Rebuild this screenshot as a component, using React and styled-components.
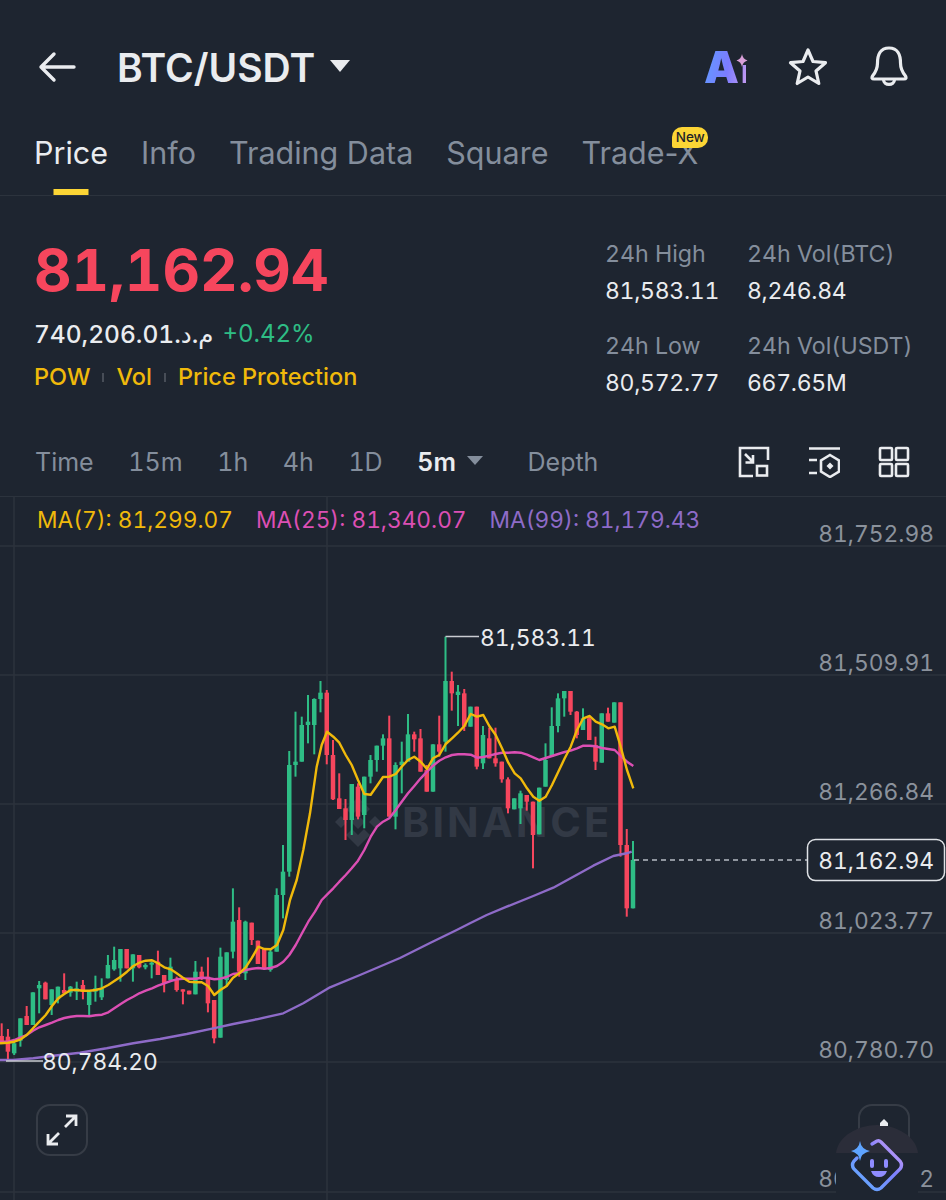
import React from 'react';
import styled, { createGlobalStyle } from 'styled-components';

const GlobalStyle = createGlobalStyle`
  html, body {
    margin: 0;
    padding: 0;
    background: #1e2530;
  }
  * {
    box-sizing: border-box;
  }
`;

const green = '#2ebd85';
const red = '#f6465d';

const Page = styled.div`
  width: 946px;
  height: 1200px;
  overflow: hidden;
  background: #1e2530;
  color: #eaecef;
  font-family: Inter, "Noto Sans", "DejaVu Sans", sans-serif;
  font-variant-numeric: tabular-nums;
`;

const TopBar = styled.header`
  display: flex;
  align-items: center;
  height: 134px;
  padding: 0 38px;
`;

const BackIcon = styled.svg`
  width: 38px;
  height: 38px;
  margin-right: 41px;
  flex: none;
`;

const Pair = styled.h1`
  margin: 0;
  font-size: 39px;
  font-weight: 600;
  color: #eaecef;
`;

const Caret = styled.span`
  width: 0;
  height: 0;
  margin-left: ${(p) => p.$gap || 15}px;
  margin-top: ${(p) => p.$top || 0}px;
  border-left: ${(p) => p.$size || 10}px solid transparent;
  border-right: ${(p) => p.$size || 10}px solid transparent;
  border-top: ${(p) => (p.$size || 10) * 1.2}px solid ${(p) => p.$color || '#eaecef'};
`;

const TopActions = styled.div`
  display: flex;
  align-items: center;
  margin-left: auto;
  gap: 42px;
`;

const AiMark = styled.div`
  position: relative;
  width: 42px;
  height: 40px;
`;

const AiText = styled.span`
  display: block;
  font-size: 44px;
  line-height: 40px;
  font-weight: 900;
  letter-spacing: -1px;
  background: linear-gradient(100deg, #5f9bff 0%, #7c7cff 55%, #c69bf0 100%);
  -webkit-background-clip: text;
  background-clip: text;
  color: transparent;
`;

const AiStem = styled.span`
  font-size: 33px;
  margin-left: 3px;
`;

const Sparkle = styled.svg`
  position: absolute;
  top: 7px;
  right: -2px;
  width: 12px;
  height: 13px;
`;

const TabBar = styled.nav`
  display: flex;
  gap: 33px;
  height: 62px;
  padding: 0 34px;
  border-bottom: 1px solid #2c333d;
`;

const Tab = styled.div`
  position: relative;
  height: 61px;
  line-height: 38px;
  font-size: 30.5px;
  font-weight: 400;
  font-variant-numeric: normal;
  color: ${(p) => (p.$active ? '#eaecef' : '#848e9c')};
`;

const TabMark = styled.span`
  position: absolute;
  left: 50%;
  bottom: 0;
  width: 35px;
  height: 6px;
  transform: translateX(-50%);
  background: #fcd535;
`;

const NewBadge = styled.span`
  position: absolute;
  top: -7px;
  right: -10px;
  width: 36px;
  height: 21px;
  border-radius: 10px 10px 10px 2px;
  background: #fcd535;
  color: #1e2329;
  font-size: 13.5px;
  font-weight: 500;
  line-height: 21px;
  text-align: center;
`;

const Summary = styled.section`
  display: flex;
  justify-content: space-between;
  height: 232px;
  padding: 38px 0 0 34px;
`;

const SummaryLeft = styled.div`
  display: flex;
  flex-direction: column;
`;

const LastPrice = styled.div`
  font-size: 58.2px;
  line-height: 72px;
  font-weight: 700;
  color: ${red};
`;

const FiatRow = styled.div`
  display: flex;
  align-items: center;
  gap: 9px;
  margin-top: 12px;
  font-size: 24.5px;
  line-height: 32px;
  font-weight: 500;
`;

const Change = styled.span`
  color: ${green};
  font-size: 24px;
  font-weight: 400;
`;

const TagRow = styled.div`
  display: flex;
  align-items: center;
  gap: 12px;
  margin-top: 12px;
  font-size: 23.5px;
  line-height: 30px;
  font-weight: 500;
  color: #f0b90b;
`;

const TagDivider = styled.i`
  width: 2px;
  height: 9px;
  background: #474d57;
`;

const Stats = styled.div`
  display: grid;
  grid-template-columns: 142px 199px;
  grid-auto-rows: 92px;
  padding-top: 5px;
`;

const Stat = styled.div`
  display: flex;
  flex-direction: column;
  gap: 7px;
  line-height: 30px;
`;

const StatLabel = styled.span`
  font-size: 23.2px;
  color: #848e9c;
`;

const StatValue = styled.span`
  font-size: 23px;
  letter-spacing: -0.3px;
  color: #eaecef;
`;

const IntervalBar = styled.div`
  display: flex;
  align-items: center;
  height: 68px;
  padding: 0 36px 0 35px;
  font-size: 25px;
  color: #848e9c;
`;

const Intervals = styled.div`
  display: flex;
  align-items: center;
  gap: 34.6px;
`;

const Interval = styled.span`
  color: ${(p) => (p.$active ? '#eaecef' : '#848e9c')};
  font-weight: ${(p) => (p.$active ? 600 : 400)};
`;

const ActiveInterval = styled.div`
  display: flex;
  align-items: center;
  margin-right: 10px;
`;

const ToolIcons = styled.div`
  display: flex;
  gap: 38px;
  margin-left: auto;
`;

const ToolIcon = styled.svg`
  width: 32px;
  height: 32px;
`;

const Chart = styled.section`
  position: relative;
  height: 704px;
  border-top: 1px solid #2c333d;
`;

const ChartCanvas = styled.svg`
  position: absolute;
  top: -1px;
  left: 0;
  width: 946px;
  height: 704px;
`;

const Legend = styled.div`
  position: relative;
  display: flex;
  gap: 23px;
  padding: 8px 0 0 37px;
  font-size: 22.7px;
  line-height: 30px;
`;

const LegendItem = styled.span`
  color: ${(p) => p.$color};
`;

const ExpandButton = styled.button`
  position: absolute;
  left: 36px;
  bottom: 44px;
  display: flex;
  align-items: center;
  justify-content: center;
  width: 52px;
  height: 52px;
  padding: 0;
  border: 2px solid #363c46;
  border-radius: 14px;
  background: transparent;
`;

const CollapseButton = styled.button`
  position: absolute;
  left: 858px;
  bottom: 44px;
  width: 52px;
  height: 52px;
  padding: 0;
  border: 2px solid #363c46;
  border-radius: 14px;
  background: transparent;
`;

const Assistant = styled.svg`
  position: absolute;
  left: 836px;
  bottom: 0;
  width: 84px;
  height: 88px;
`;

// candle values are [wick top, wick bottom, body top, body bottom, up?]
const leftCandles = [
  [430, 490, 468, 490, 0], [447, 540, 470, 515, 0], [480, 525, 490, 520, 1], [415, 500, 415, 482, 1],
  [378, 435, 408, 435, 0], [337, 435, 337, 435, 1], [303, 400, 315, 325, 1], [305, 358, 308, 358, 0],
  [328, 405, 328, 375, 1], [320, 370, 320, 358, 1], [280, 340, 330, 340, 0], [318, 350, 320, 338, 1],
  [305, 360, 325, 335, 1], [300, 358, 315, 335, 0], [335, 405, 335, 375, 1], [287, 365, 325, 335, 1],
  [295, 360, 325, 352, 1], [225, 295, 255, 295, 1], [200, 272, 240, 268, 1], [207, 305, 207, 265, 1],
  [207, 265, 207, 265, 0], [223, 305, 223, 265, 1], [225, 265, 225, 262, 0], [250, 268, 255, 262, 1],
  [245, 295, 248, 254, 1], [212, 285, 245, 285, 0], [285, 337, 285, 310, 0], [233, 300, 260, 300, 1],
  [290, 335, 300, 330, 0], [328, 373, 328, 335, 0], [332, 343, 332, 343, 0], [243, 343, 275, 343, 1],
  [260, 300, 275, 295, 0], [232, 397, 290, 370, 0], [360, 490, 360, 475, 0], [203, 473, 230, 473, 1],
  [217, 318, 217, 300, 1], [25, 235, 125, 215, 1], [82, 290, 120, 275, 0], [122, 300, 125, 280, 1],
  [128, 195, 128, 180, 0], [182, 252, 182, 252, 0], [205, 270, 205, 265, 0], [210, 275, 215, 270, 1],
  [25, 215, 45, 215, 1],
].map((c, i) => ({
  x: 1.67 + 6.25 * i,
  wt: 880 + c[0] / 3,
  wb: 880 + c[1] / 3,
  bt: 880 + c[2] / 3,
  bb: 880 + c[3] / 3,
  up: c[4],
}));

const rightCandles = [
  [675, 895, 755, 825, 1], [393, 770, 435, 755, 1], [275, 470, 425, 435, 1], [290, 425, 315, 425, 1],
  [225, 370, 305, 315, 1], [235, 403, 237, 315, 1], [183, 277, 218, 237, 1], [210, 433, 218, 405, 0],
  [360, 540, 405, 538, 0], [460, 567, 535, 567, 0], [537, 660, 565, 600, 0], [492, 645, 492, 600, 1],
  [490, 598, 500, 590, 0], [470, 625, 470, 585, 1], [405, 490, 420, 470, 1], [377, 455, 377, 420, 1],
  [343, 420, 355, 377, 1], [287, 590, 355, 590, 0], [427, 628, 435, 590, 1], [365, 520, 425, 435, 1],
  [282, 420, 343, 425, 1], [335, 395, 343, 358, 0], [327, 455, 355, 455, 0], [435, 515, 450, 515, 0],
  [373, 515, 373, 515, 1], [287, 410, 373, 395, 0], [50, 395, 183, 365, 1], [155, 272, 183, 220, 0],
  [195, 318, 215, 225, 1], [207, 333, 220, 320, 0], [260, 320, 260, 320, 1], [260, 448, 260, 440, 0],
  [318, 447, 345, 430, 1], [323, 415, 355, 415, 0], [323, 440, 415, 430, 0], [425, 488, 425, 478, 0],
  [472, 580, 478, 565, 0], [535, 568, 535, 568, 1], [512, 612, 520, 565, 1], [525, 572, 525, 545, 0],
  [545, 745, 545, 645, 0], [503, 643, 503, 643, 1], [370, 500, 420, 500, 1], [262, 410, 318, 410, 1],
  [220, 337, 235, 318, 1], [213, 290, 213, 235, 1], [213, 285, 213, 275, 0], [273, 355, 275, 345, 0],
  [265, 330, 295, 330, 1], [290, 360, 295, 360, 0], [350, 450, 375, 425, 0], [280, 428, 280, 428, 1],
  [263, 305, 280, 305, 0], [247, 308, 247, 308, 1], [247, 710, 247, 675, 0], [627, 890, 675, 865, 0],
  [663, 865, 720, 865, 1],
].map((c, i) => ({
  x: 283 + 6.25 * i,
  wt: 620 + c[0] / 3,
  wb: 620 + c[1] / 3,
  bt: 620 + c[2] / 3,
  bb: 620 + c[3] / 3,
  up: c[4],
}));

const candles = [...leftCandles, ...rightCandles];

const fromLeft = (pts) => pts.map(([x, y]) => `${(x / 3).toFixed(1)},${(880 + y / 3).toFixed(1)}`);
const fromRight = (pts) => pts.map(([x, y]) => `${(280 + x / 3).toFixed(1)},${(620 + y / 3).toFixed(1)}`);

const ma7 = [
  ...fromLeft([[0, 490], [24, 488], [43, 485], [62, 478], [80, 465], [99, 445], [118, 425], [137, 405], [156, 378], [175, 355], [193, 342], [212, 330], [230, 330], [249, 332], [268, 332], [287, 330], [306, 325], [325, 315], [343, 303], [362, 290], [381, 275], [400, 258], [418, 248], [437, 242], [456, 241], [474, 250], [493, 262], [512, 268], [530, 280], [549, 293], [568, 305], [587, 307], [605, 307], [624, 318], [643, 345], [661, 330], [680, 318], [699, 293], [718, 280], [737, 262], [756, 233], [775, 200], [793, 207], [812, 208], [831, 195], [850, 150]]),
  ...fromRight([[30, 840], [50, 780], [70, 690], [90, 580], [110, 440], [125, 375], [141, 335], [160, 350], [178, 368], [197, 405], [215, 435], [234, 480], [253, 522], [272, 524], [291, 497], [309, 471], [328, 470], [347, 462], [365, 440], [384, 420], [403, 410], [422, 425], [441, 447], [459, 415], [478, 405], [497, 372], [516, 355], [534, 338], [553, 318], [572, 282], [591, 290], [610, 285], [628, 318], [647, 345], [666, 385], [685, 428], [704, 460], [722, 475], [741, 505], [760, 530], [778, 542], [797, 530], [816, 495], [835, 455], [854, 415], [872, 380], [891, 330], [910, 295], [929, 288], [947, 305], [966, 313], [985, 325], [1004, 320], [1022, 380], [1041, 450], [1060, 505]]),
].join(' ');

const ma25 = [
  ...fromLeft([[0, 485], [24, 485], [43, 480], [62, 472], [80, 465], [99, 452], [118, 442], [137, 435], [156, 428], [175, 420], [193, 414], [212, 410], [230, 408], [249, 408], [268, 409], [287, 406], [306, 404], [325, 397], [343, 385], [362, 372], [381, 360], [400, 350], [418, 340], [437, 332], [456, 325], [474, 317], [493, 310], [512, 303], [530, 298], [549, 296], [568, 296], [587, 296], [605, 293], [624, 294], [643, 298], [661, 296], [680, 291], [699, 282], [718, 280], [737, 270], [756, 266], [775, 264], [793, 266], [812, 264], [831, 258], [850, 245], [868, 225], [887, 195], [906, 160], [925, 125], [945, 95], [965, 60], [990, 35]]),
  ...fromRight([[160, 805], [178, 785], [197, 765], [215, 745], [234, 722], [253, 690], [272, 650], [291, 620], [309, 605], [328, 595], [347, 570], [365, 545], [384, 520], [403, 498], [422, 475], [441, 455], [459, 437], [478, 422], [497, 412], [516, 405], [534, 403], [553, 403], [572, 404], [591, 413], [610, 411], [628, 407], [647, 402], [666, 398], [685, 398], [704, 397], [722, 398], [741, 404], [760, 412], [778, 420], [797, 414], [816, 408], [835, 402], [854, 396], [872, 392], [891, 385], [910, 377], [929, 377], [947, 379], [966, 384], [985, 387], [1004, 390], [1022, 408], [1041, 425], [1060, 438]]),
].join(' ');

const ma99 = [
  ...fromLeft([[0, 540], [40, 540], [100, 535], [160, 527], [240, 518], [320, 505], [400, 490], [480, 477], [560, 462], [640, 445], [700, 432], [770, 418], [850, 400], [910, 370], [990, 322]]),
  '360,975', '400,958', '430,943',
  ...fromRight([[530, 930], [570, 910], [620, 885], [680, 860], [760, 828], [820, 803], [880, 770], [940, 737], [1000, 708], [1040, 700], [1055, 695]]),
].join(' ');

const gridRows = [546, 675, 804, 933, 1062, 1192];
const axisLabels = [
  ['81,752.98', 542],
  ['81,509.91', 671],
  ['81,266.84', 800],
  ['81,023.77', 929],
  ['80,780.70', 1058],
  ['80,537.62', 1187],
];

const stats = [
  ['24h High', '81,583.11'],
  ['24h Vol(BTC)', '8,246.84'],
  ['24h Low', '80,572.77'],
  ['24h Vol(USDT)', '667.65M'],
];

const Star = () => (
  <svg width="40" height="40" viewBox="0 0 40 40" fill="none" stroke="#eaecef" strokeWidth="3.2" strokeLinejoin="round">
    <path d="M20 3 L25 14.5 L37.5 15.7 L28 24 L30.8 36.5 L20 30 L9.2 36.5 L12 24 L2.5 15.7 L15 14.5 Z" />
  </svg>
);

const Bell = () => (
  <svg width="38" height="42" viewBox="0 0 38 42" fill="none" stroke="#eaecef" strokeWidth="3.2" strokeLinejoin="round" strokeLinecap="round">
    <path d="M19 2 C10 2 7.5 9 7.5 17 C7.5 24 5 27 2.5 30 Q1 33 4 33 H34 Q37 33 35.5 30 C33 27 30.5 24 30.5 17 C30.5 9 28 2 19 2 Z" />
    <path d="M13.5 33.5 C13.5 40 24.5 40 24.5 33.5" />
  </svg>
);

const BinanceMark = () => (
  <g fill="#323945">
    <path d="M358 797 L370 809 L364 815 L358 809 L352 815 L346 809 Z" />
    <path d="M335 822 L341 816 L347 822 L341 828 Z" />
    <path d="M369 822 L375 816 L381 822 L375 828 Z" />
    <path d="M358 815 L365 822 L358 829 L351 822 Z" />
    <path d="M358 847 L346 835 L352 829 L358 835 L364 829 L370 835 Z" />
  </g>
);

const App = () => {
  return (
    <Page>
      <GlobalStyle />
      <TopBar>
        <BackIcon viewBox="0 0 38 38" fill="none" stroke="#eaecef" strokeWidth="3.4" strokeLinecap="round" strokeLinejoin="round">
          <path d="M3 19 H36 M16 6 L3 19 L16 32" />
        </BackIcon>
        <Pair>BTC/USDT</Pair>
        <Caret $top={-2} />
        <TopActions>
          <AiMark>
            <AiText>
              A<AiStem>ı</AiStem>
            </AiText>
            <Sparkle viewBox="0 0 12 14">
              <path d="M6 0 Q6.8 5.5 12 7 Q6.8 8.5 6 14 Q5.2 8.5 0 7 Q5.2 5.5 6 0 Z" fill="#d9a0d8" />
            </Sparkle>
          </AiMark>
          <Star />
          <Bell />
        </TopActions>
      </TopBar>

      <TabBar>
        <Tab $active>
          Price
          <TabMark />
        </Tab>
        <Tab>Info</Tab>
        <Tab>Trading Data</Tab>
        <Tab>Square</Tab>
        <Tab>
          Trade-X
          <NewBadge>New</NewBadge>
        </Tab>
      </TabBar>

      <Summary>
        <SummaryLeft>
          <LastPrice>81,162.94</LastPrice>
          <FiatRow>
            <span>
              740,206.01<span dir="rtl">م.د.</span>
            </span>
            <Change>+0.42%</Change>
          </FiatRow>
          <TagRow>
            <span>POW</span>
            <TagDivider />
            <span>Vol</span>
            <TagDivider />
            <span>Price Protection</span>
          </TagRow>
        </SummaryLeft>
        <Stats>
          {stats.map(([label, value]) => (
            <Stat key={label}>
              <StatLabel>{label}</StatLabel>
              <StatValue>{value}</StatValue>
            </Stat>
          ))}
        </Stats>
      </Summary>

      <IntervalBar>
        <Intervals>
          <Interval>Time</Interval>
          <Interval>15m</Interval>
          <Interval>1h</Interval>
          <Interval>4h</Interval>
          <Interval>1D</Interval>
          <ActiveInterval>
            <Interval $active>5m</Interval>
            <Caret $gap={11} $top={-4} $size={8} $color="#848e9c" />
          </ActiveInterval>
          <Interval>Depth</Interval>
        </Intervals>
        <ToolIcons>
          <ToolIcon viewBox="0 0 32 32" fill="none" stroke="#eaecef" strokeWidth="2.6">
            <path d="M15 30 H2 V2 H30 V14" />
            <path d="M7 8 L15 16 M15 9 V16.5 H7.5" />
            <rect x="19" y="20" width="10" height="9.5" />
          </ToolIcon>
          <ToolIcon viewBox="0 0 32 32" fill="none" stroke="#eaecef" strokeWidth="2.6">
            <path d="M1 2.5 H32 M1 14 H9 M1 27 H9" />
            <path d="M22 9 L31 14.5 V25.5 L22 31 L13 25.5 V14.5 Z" />
            <path d="M22 16.5 L25.5 20 L22 23.5 L18.5 20 Z" fill="#eaecef" stroke="none" />
          </ToolIcon>
          <ToolIcon viewBox="0 0 32 32" fill="none" stroke="#eaecef" strokeWidth="2.6">
            <rect x="2" y="2" width="12" height="12" rx="1" />
            <rect x="18" y="2" width="12" height="12" rx="1" />
            <rect x="2" y="18" width="12" height="12" rx="1" />
            <rect x="18" y="18" width="12" height="12" rx="1" />
          </ToolIcon>
        </ToolIcons>
      </IntervalBar>

      <Chart>
        <ChartCanvas viewBox="0 496 946 704">
          {gridRows.map((y) => (
            <line key={y} x1="0" x2="946" y1={y} y2={y} stroke="#2c333d" strokeWidth="1.5" />
          ))}
          <line x1="14" x2="14" y1="496" y2="1200" stroke="#2c333d" strokeWidth="1.5" />
          <line x1="327" x2="327" y1="496" y2="1200" stroke="#2c333d" strokeWidth="1.5" />

          <BinanceMark />
          <text x="402" y="837" fontSize="41.5" fontWeight="700" letterSpacing="3" fill="#323945">
            BINANCE
          </text>

          {candles.map((c) => {
            const color = c.up ? green : red;
            return (
              <g key={c.x} fill={color}>
                <rect x={c.x - 1} y={c.wt} width="2" height={c.wb - c.wt} />
                <rect x={c.x - 2.25} y={c.bt} width="4.5" height={Math.max(c.bb - c.bt, 2)} />
              </g>
            );
          })}

          <polyline points={ma99} fill="none" stroke="#8e6bc8" strokeWidth="2.4" strokeLinejoin="round" />
          <polyline points={ma25} fill="none" stroke="#dc4fb4" strokeWidth="2.4" strokeLinejoin="round" />
          <polyline points={ma7} fill="none" stroke="#f0b90b" strokeWidth="2.4" strokeLinejoin="round" />

          <path d="M445.5 636.5 H479" stroke="#c9ccd1" strokeWidth="1.5" fill="none" />
          <text x="480" y="646" fontSize="22.8" fill="#eaecef">81,583.11</text>
          <path d="M6 1061 H43" stroke="#c9ccd1" strokeWidth="1.5" fill="none" />
          <text x="42" y="1070" fontSize="22.8" fill="#eaecef">80,784.20</text>

          {axisLabels.map(([label, y]) => (
            <text key={label} x="934" y={y} fontSize="22.8" textAnchor="end" fill="#8b929c">
              {label}
            </text>
          ))}

          <line x1="634" x2="807" y1="860" y2="860" stroke="#b7bcc3" strokeWidth="1.5" strokeDasharray="5 4" />
          <rect x="807.5" y="839.5" width="137" height="41" rx="8" fill="#1e2530" stroke="#dfe2e6" strokeWidth="1.5" />
          <text x="934" y="869" fontSize="22.8" textAnchor="end" fill="#eaecef">81,162.94</text>
        </ChartCanvas>

        <Legend>
          <LegendItem $color="#f0b90b">MA(7): 81,299.07</LegendItem>
          <LegendItem $color="#dc4fb4">MA(25): 81,340.07</LegendItem>
          <LegendItem $color="#8e6bc8">MA(99): 81,179.43</LegendItem>
        </Legend>

        <ExpandButton aria-label="Expand chart">
          <svg width="34" height="34" viewBox="0 0 34 34" fill="none" stroke="#eaecef" strokeWidth="2.8">
            <path d="M20 14 L31 3 M21 3 H31 V13" />
            <path d="M14 20 L3 31 M13 31 H3 V21" />
          </svg>
        </ExpandButton>
        <CollapseButton aria-label="Collapse" />

        <Assistant viewBox="836 1112 84 88">
          <defs>
            <linearGradient id="botRing" x1="0" y1="1" x2="1" y2="0">
              <stop offset="0" stopColor="#5fb3ff" />
              <stop offset="0.6" stopColor="#7d80ff" />
              <stop offset="1" stopColor="#e0a6f0" />
            </linearGradient>
          </defs>
          <path d="M836 1153 C838 1136 858 1125 877 1125 C896 1125 916 1136 918 1153 Z" fill="#2b2d39" />
          <rect x="836" y="1153" width="82" height="47" fill="#1e2530" />
          <path d="M880 1123 L884 1119 L888 1123 L888 1126 H880 Z" fill="#eaecef" />
          <path
            d="M872 1144 L877 1141 Q879 1140 881 1142 L900 1161 Q903 1165 900 1169 L881 1188 Q877 1191 873 1188 L854 1169 Q851 1165 854 1161 L857 1158"
            fill="none"
            stroke="url(#botRing)"
            strokeWidth="3.4"
            strokeLinecap="round"
          />
          <path d="M860 1141 Q861 1149 870 1151 Q861 1153 860 1161 Q859 1153 851 1151 Q859 1149 860 1141 Z" fill="#5ea4ff" />
          <rect x="870" y="1159" width="4" height="9" rx="2" fill="#8f8cff" />
          <rect x="884" y="1159" width="4" height="9" rx="2" fill="#8f8cff" />
          <path d="M871 1171 H887 Q885 1177 879 1177 Q873 1177 871 1171 Z" fill="#8f8cff" />
        </Assistant>
      </Chart>
    </Page>
  );
};

export default App;
